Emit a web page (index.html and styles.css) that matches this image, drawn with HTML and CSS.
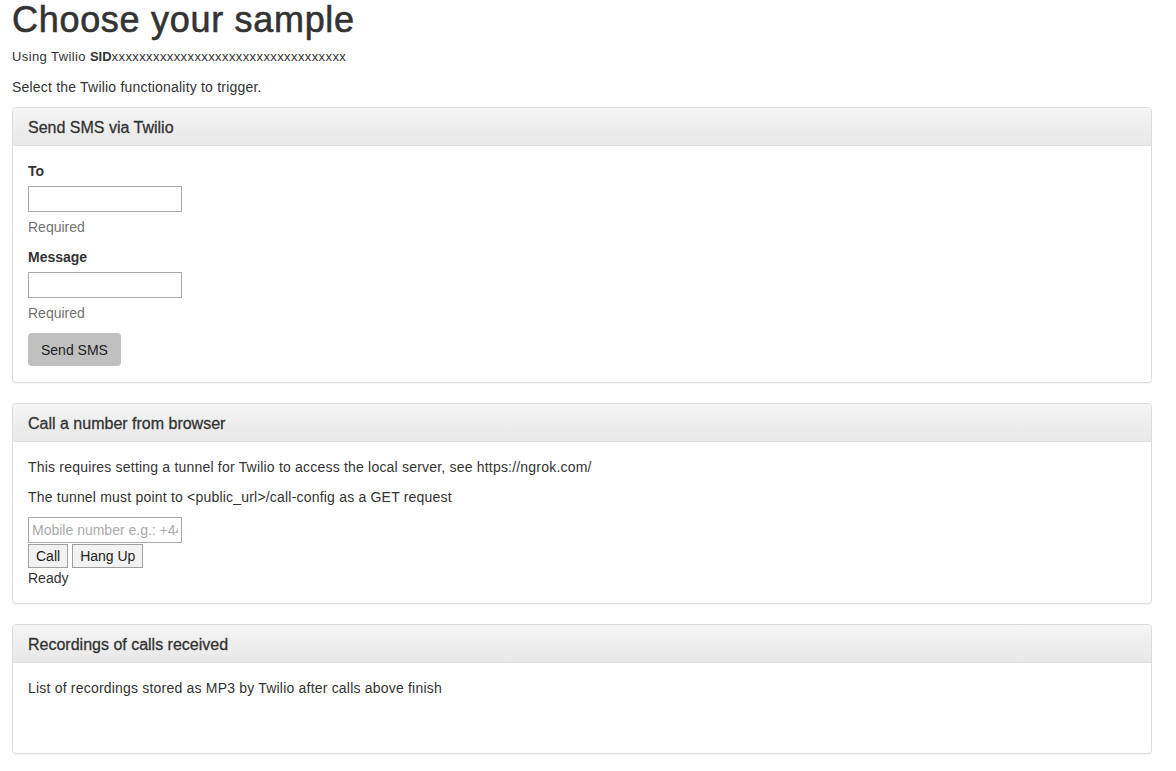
FILE: index.html
```html
<!DOCTYPE html>
<html>
<head>
<meta charset="utf-8">
<link rel="stylesheet" href="styles.css">
</head>
<body>
<div class="container">
  <h1 class="title">Choose your sample</h1>
  <p class="line sid-line">Using Twilio <strong>SID</strong>xxxxxxxxxxxxxxxxxxxxxxxxxxxxxxxxxx</p>
  <p class="line">Select the Twilio functionality to trigger.</p>

  <section class="panel">
    <div class="panel-heading">Send SMS via Twilio</div>
    <div class="panel-body sms">
      <div class="field">
        <label class="label">To</label>
        <input class="input" type="text">
        <span class="help">Required</span>
      </div>
      <div class="field">
        <label class="label">Message</label>
        <input class="input" type="text">
        <span class="help">Required</span>
      </div>
      <button class="btn-send">Send SMS</button>
    </div>
  </section>

  <section class="panel">
    <div class="panel-heading">Call a number from browser</div>
    <div class="panel-body">
      <p class="text">This requires setting a tunnel for Twilio to access the local server, see https://ngrok.com/</p>
      <p class="text">The tunnel must point to &lt;public_url&gt;/call-config as a GET request</p>
      <div class="call">
        <input class="input phone" type="text" placeholder="Mobile number e.g.: +44">
        <div class="call-buttons">
          <button class="btn-plain">Call</button>
          <button class="btn-plain">Hang Up</button>
        </div>
        <div class="status">Ready</div>
      </div>
    </div>
  </section>

  <section class="panel">
    <div class="panel-heading">Recordings of calls received</div>
    <div class="panel-body recordings">
      <p class="text">List of recordings stored as MP3 by Twilio after calls above finish</p>
    </div>
  </section>
</div>
</body>
</html>
```
FILE: styles.css
```css
* { box-sizing: border-box; }
html, body { margin: 0; padding: 0; background: #fff; }
body {
  font-family: "Liberation Sans", Arial, sans-serif;
  font-size: 14px;
  line-height: 20px;
  color: #333;
}
.container { padding: 0 12px; width: 1164px; }
.title {
  font-size: 36px;
  font-weight: 500;
  line-height: 40px;
  letter-spacing: 0.7px;
  -webkit-text-stroke: 0.6px #333;
  margin: 0 0 7px 0;
  color: #333;
}
.line { margin: 0 0 10px 0; letter-spacing: 0.2px; }
.sid-line { font-size: 13px; letter-spacing: 0.4px; }
.line strong { font-weight: bold; letter-spacing: 0; }
.panel {
  border: 1px solid #ddd;
  border-radius: 4px;
  margin-bottom: 20px;
  box-shadow: 0 1px 1px rgba(0,0,0,0.05);
  background: #fff;
}
.panel-heading {
  height: 38px;
  padding: 10px 15px 9px;
  font-size: 16px;
  line-height: 19px;
  -webkit-text-stroke: 0.3px #333;
  background: linear-gradient(to bottom, #f5f5f5 0%, #e8e8e8 100%);
  border-bottom: 1px solid #ddd;
  border-radius: 3px 3px 0 0;
  color: #333;
}
.panel-body { padding: 15px; }
.panel-body.sms { padding-top: 15px; padding-bottom: 16px; }
.field { display: flex; flex-direction: column; align-items: flex-start; }
.label { font-weight: bold; font-size: 14px; line-height: 20px; margin-bottom: 5px; }
.input {
  width: 154px;
  height: 26px;
  border: 1px solid #a9a9a9;
  font: 14px "Liberation Sans", Arial, sans-serif;
  padding: 2px 3px;
  margin: 0;
}
.help { color: #737373; font-size: 14px; line-height: 20px; margin: 5px 0 10px; }
.btn-send {
  background: #c0c0c0;
  border: none;
  border-radius: 4px;
  height: 33px;
  padding: 0 13px;
  font: 14px "Liberation Sans", Arial, sans-serif;
  color: #222;
}
.text { margin: 0 0 10px; letter-spacing: 0.2px; }
.call { display: flex; flex-direction: column; align-items: flex-start; }
.phone::placeholder { color: #aaa; }
.call-buttons { display: flex; gap: 4px; margin-top: 1px; }
.btn-plain {
  background: #f2f2f2;
  border: 1px solid #a0a0a0;
  height: 24px;
  padding: 0 7px;
  font: 14px "Liberation Sans", Arial, sans-serif;
  color: #222;
  margin: 0;
}
.status { font-size: 14px; line-height: 20px; }
.recordings { min-height: 90px; }
```
